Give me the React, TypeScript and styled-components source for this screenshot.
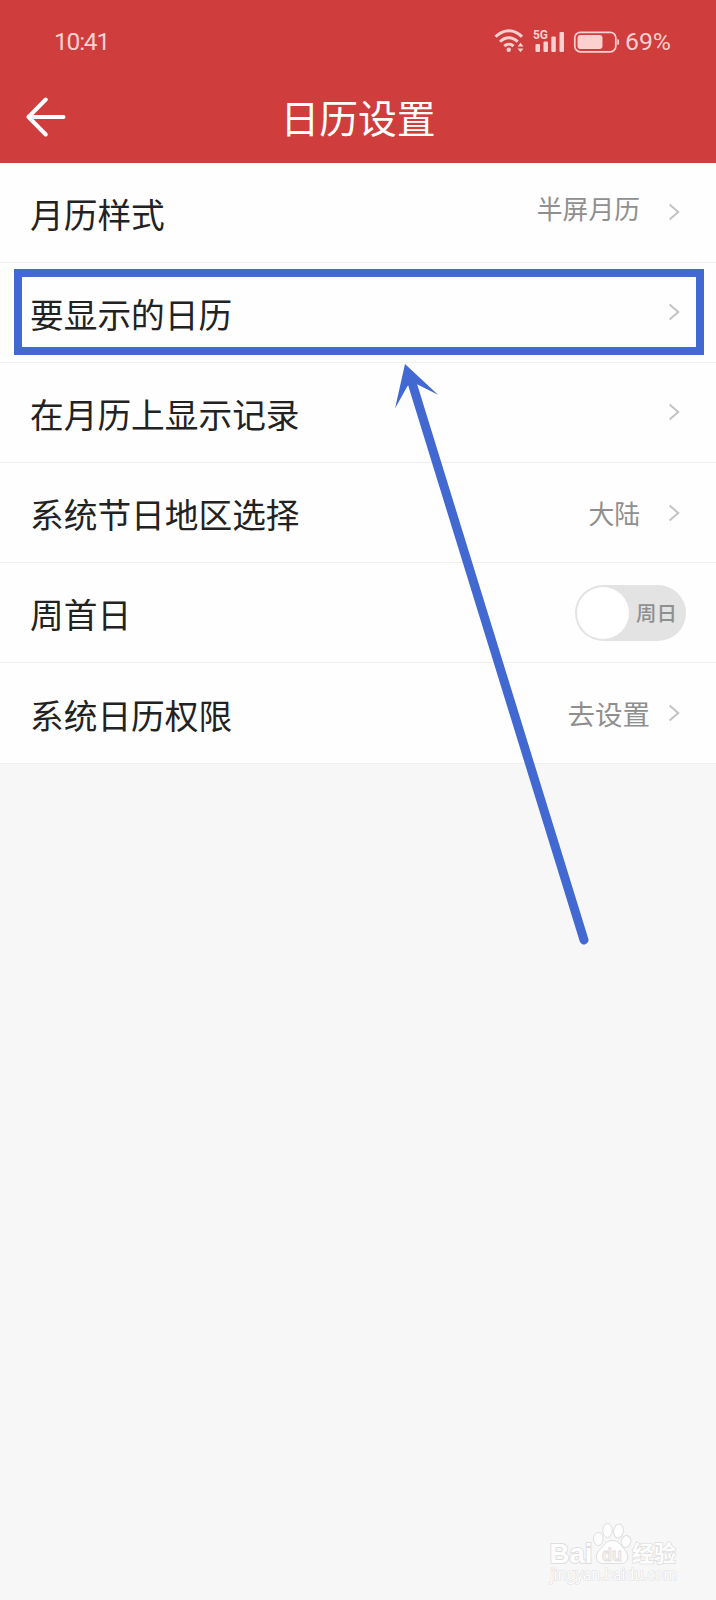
import React from 'react';
import styled, { createGlobalStyle } from 'styled-components';

const GlobalStyle = createGlobalStyle`
  * { box-sizing: border-box; }
  body {
    margin: 0;
    background: #f7f7f7;
    font-family: "Noto Sans CJK SC", "Noto Sans", sans-serif;
  }
`;

const Screen = styled.div`
  position: relative;
  width: 716px;
  height: 1600px;
  overflow: hidden;
  display: flex;
  flex-direction: column;
  background: #f7f7f7;
`;

const Header = styled.header`
  height: 162.5px;
  background: #cf3d3d;
  color: #fff;
`;

const StatusBar = styled.div`
  height: 82px;
  padding: 1px 45px 0 54px;
  display: flex;
  align-items: center;
  justify-content: space-between;
  color: #fbd0cf;
  font-family: Roboto, sans-serif;
`;

const Clock = styled.span`
  font-size: 24.5px;
  letter-spacing: -1.2px;
  line-height: 28px;
`;

const StatusIcons = styled.div`
  display: flex;
  align-items: center;
`;

const Battery = styled.span`
  margin-left: 5px;
  font-size: 24.8px;
  line-height: 28px;
`;

const TitleBar = styled.div`
  display: grid;
  grid-template-columns: 100px 1fr 100px;
  align-items: center;
  height: 70px;
`;

const BackButton = styled.button`
  display: flex;
  padding: 0 0 0 25px;
  border: 0;
  background: none;
`;

const Title = styled.h1`
  margin: -3px 0 0;
  text-align: center;
  font-size: 38.8px;
  font-weight: 400;
  line-height: 56px;
`;

const List = styled.main`
  display: flex;
  flex-direction: column;
`;

const Row = styled.section`
  position: relative;
  display: flex;
  align-items: center;
  height: 100.2px;
  padding: 0 30px;
  background: #fefefe;
  border-bottom: 1px solid #efefef;
`;

const Label = styled.span`
  flex: 1;
  color: #222;
  font-size: 33.7px;
  line-height: 48px;
  padding-top: 3px;
`;

const Value = styled.span<{ $size: number; $gap: number; $lift: number }>`
  color: #8f8f8f;
  font-size: ${(p) => p.$size}px;
  line-height: 40px;
  margin-right: ${(p) => p.$gap}px;
  padding-bottom: ${(p) => p.$lift}px;
`;

const ChevronIcon = styled.svg`
  margin-right: 6.5px;
  display: block;
`;

const Highlight = styled.div`
  position: absolute;
  left: 14px;
  top: 6px;
  width: 689.500px;
  height: 86px;
  border: 8px solid #4169d1;
`;

const Toggle = styled.div`
  display: flex;
  align-items: center;
  width: 111px;
  height: 56px;
  margin-top: 1px;
  padding: 2px;
  border-radius: 28px;
  background: #e3e3e3;
`;

const Knob = styled.span`
  width: 52px;
  height: 52px;
  border-radius: 50%;
  background: #fff;
`;

const ToggleText = styled.span`
  margin: -2px 0 0 7px;
  color: #8f8f8f;
  font-size: 20.5px;
  font-weight: 500;
  line-height: 30px;
`;

const Arrow = styled.svg`
  position: absolute;
  left: 380px;
  top: 350px;
`;

const Watermark = styled.div`
  position: absolute;
  left: 544px;
  top: 1518px;
  width: 142px;
  height: 72px;
`;

const Chevron = () => (
  <ChevronIcon width="12" height="18" viewBox="0 0 12 18" fill="none">
    <path d="M1.6 1.5L10.2 9L1.6 16.5" stroke="#c4c4c4" strokeWidth="2" />
  </ChevronIcon>
);

type Item = {
  label: string;
  value?: string;
  size?: number;
  gap?: number;
  lift?: number;
  highlighted?: boolean;
  toggle?: boolean;
};

const items: Item[] = [
  { label: '月历样式', value: '半屏月历', size: 25.8, gap: 27.5, lift: 8 },
  { label: '要显示的日历', highlighted: true },
  { label: '在月历上显示记录' },
  { label: '系统节日地区选择', value: '大陆', size: 25.8, gap: 27.5 },
  { label: '周首日', toggle: true },
  { label: '系统日历权限', value: '去设置', size: 27.5, gap: 17.5 },
];

export default function App() {
  return (
    <Screen>
      <GlobalStyle />
      <Header>
        <StatusBar>
          <Clock>10:41</Clock>
          <StatusIcons>
            <svg width="126" height="30" viewBox="0 0 126 30" fill="#fbd0cf">
              <g fill="none" stroke="#fbd0cf" strokeWidth="3">
                <path d="M1.5 9.800C9.500 1.600 20.500 1.600 28 9.800" />
                <path d="M6 14.800C11.300 9.400 18.500 9.400 23.700 14.800" />
                <path d="M10.300 19.200C13 16.600 16.800 16.600 19.500 19.200" />
              </g>
              <circle cx="14.700" cy="22.700" r="2.200" />
              <path d="M23.500 19.500L26.500 15.800L29.500 19.500ZM23.500 21.500L26.500 25.200L29.500 21.500Z" />
              <text x="39" y="12.300" fontFamily="Roboto" fontSize="13" fontWeight="700" textLength="15" lengthAdjust="spacingAndGlyphs">5G</text>
              <rect x="41.500" y="17" width="4.500" height="8" rx="1" />
              <rect x="49.500" y="14.500" width="4.500" height="10.500" rx="1" />
              <rect x="57.300" y="9.500" width="4.500" height="15.500" rx="1" />
              <rect x="65.500" y="5" width="4.500" height="20" rx="1" />
              <rect x="80.800" y="5.300" width="41" height="19.500" rx="5.500" fill="none" stroke="#fbd0cf" strokeWidth="1.700" />
              <rect x="83.500" y="8" width="25" height="14" rx="3" />
              <path d="M123.300 12Q125 12 125 13.500V16.500Q125 18 123.300 18Z" />
            </svg>
            <Battery>69%</Battery>
          </StatusIcons>
        </StatusBar>
        <TitleBar>
          <BackButton aria-label="返回">
            <svg width="42" height="40" viewBox="0 0 42 40" fill="none" stroke="#fff" strokeWidth="4" strokeLinecap="round" strokeLinejoin="round">
              <path d="M20.700 2.500L3.500 20L20.700 37.500M3.500 20H38.500" />
            </svg>
          </BackButton>
          <Title>日历设置</Title>
        </TitleBar>
      </Header>
      <List>
        {items.map((item) => (
          <Row key={item.label}>
            <Label>{item.label}</Label>
            {item.value && (
              <Value $size={item.size ?? 26} $gap={item.gap ?? 28} $lift={item.lift ?? 0}>
                {item.value}
              </Value>
            )}
            {item.toggle ? (
              <Toggle>
                <Knob />
                <ToggleText>周日</ToggleText>
              </Toggle>
            ) : (
              <Chevron />
            )}
            {item.highlighted && <Highlight />}
          </Row>
        ))}
      </List>
      <Arrow width="220" height="610" viewBox="380 350 220 610">
        <path d="M413 386L584 940" stroke="#4169d1" strokeWidth="9" strokeLinecap="round" />
        <path d="M405 364L438 394.800L415.500 383.500L407.500 386L395 408.500Z" fill="#4169d1" />
      </Arrow>
      <Watermark>
        <svg width="142" height="72" viewBox="544 1518 142 72" fill="#fdfdfd" stroke="#dedede" strokeWidth="1" fontFamily='"Noto Sans CJK SC", sans-serif'>
          <text x="549.500" y="1562.500" fontFamily="Liberation Sans" fontSize="28" fontWeight="700" textLength="43" lengthAdjust="spacingAndGlyphs" strokeWidth="1.800" paintOrder="stroke">Bai</text>
          <ellipse cx="598.300" cy="1539" rx="4.800" ry="6.500" />
          <ellipse cx="607.500" cy="1530.500" rx="4.800" ry="7" />
          <ellipse cx="618.500" cy="1531" rx="4.800" ry="7" transform="rotate(8 618.500 1531)" />
          <ellipse cx="626" cy="1541.500" rx="4.800" ry="6" transform="rotate(15 626 1541.500)" />
          <path d="M612 1540.500C605 1540.500 604 1546 599.500 1550C594 1555 596 1563.500 603 1563.500H621C628 1563.500 630 1556 625 1550C620.500 1545 619 1540.500 612 1540.500Z" />
          <text x="602" y="1560.500" fontFamily="Liberation Sans" fontSize="18" fontWeight="700" textLength="20" lengthAdjust="spacingAndGlyphs" fill="#f4f4f4" strokeWidth="0.800">du</text>
          <text x="632" y="1561" fontSize="22" fontWeight="700" textLength="44" strokeWidth="1.500" paintOrder="stroke">经验</text>
          <text x="550" y="1580" fontFamily="Noto Sans" fontSize="16" fontWeight="400" textLength="127" lengthAdjust="spacingAndGlyphs" strokeWidth="1.200" stroke="#e0e0e0" paintOrder="stroke">jingyan.baidu.com</text>
        </svg>
      </Watermark>
    </Screen>
  );
}
